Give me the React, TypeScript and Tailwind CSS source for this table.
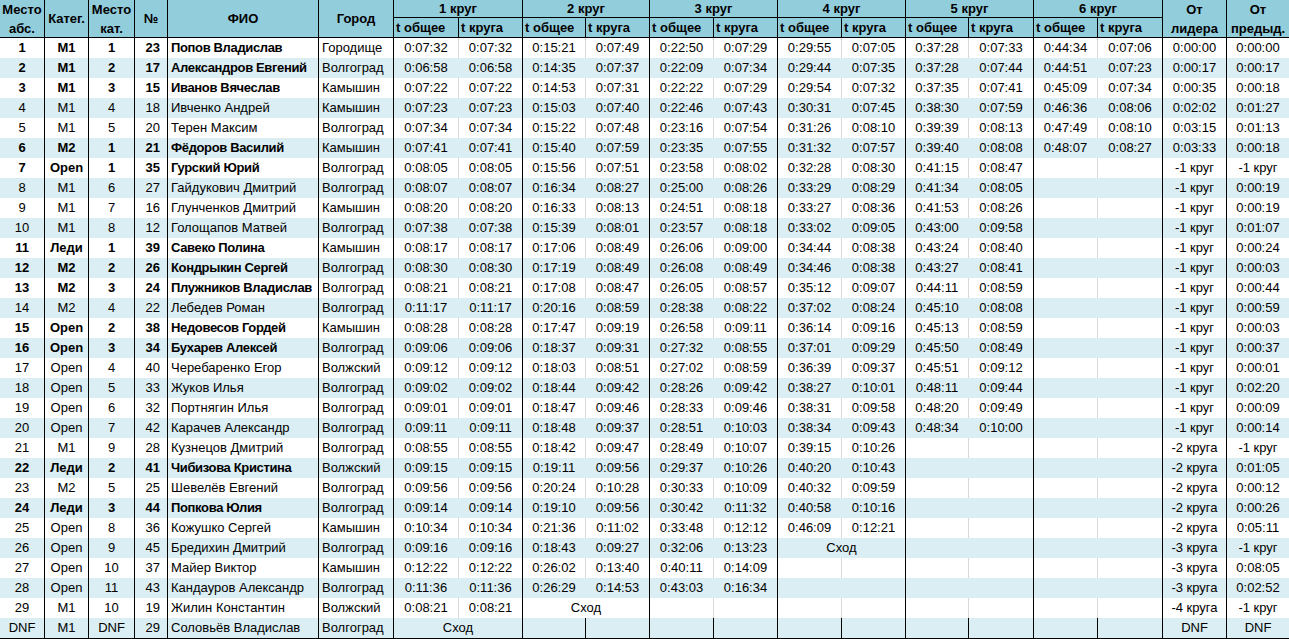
import React from "react";

type Row = {
  a: string; cat: string; pc: string; num: string; name: string; city: string;
  laps: (string[] | "dnf" | null)[]; lead: string; prev: string; bold?: boolean;
};

const L = (s: string): string[] => {
  const p = s.split(" ");
  return [p[0], p[1]];
};

const rows: Row[] = [
  { a: "1", cat: "M1", pc: "1", num: "23", name: "Попов Владислав", city: "Городище", laps: [L("0:07:32 0:07:32"), L("0:15:21 0:07:49"), L("0:22:50 0:07:29"), L("0:29:55 0:07:05"), L("0:37:28 0:07:33"), L("0:44:34 0:07:06")], lead: "0:00:00", prev: "0:00:00", bold: true },
  { a: "2", cat: "M1", pc: "2", num: "17", name: "Александров Евгений", city: "Волгоград", laps: [L("0:06:58 0:06:58"), L("0:14:35 0:07:37"), L("0:22:09 0:07:34"), L("0:29:44 0:07:35"), L("0:37:28 0:07:44"), L("0:44:51 0:07:23")], lead: "0:00:17", prev: "0:00:17", bold: true },
  { a: "3", cat: "M1", pc: "3", num: "15", name: "Иванов Вячеслав", city: "Камышин", laps: [L("0:07:22 0:07:22"), L("0:14:53 0:07:31"), L("0:22:22 0:07:29"), L("0:29:54 0:07:32"), L("0:37:35 0:07:41"), L("0:45:09 0:07:34")], lead: "0:00:35", prev: "0:00:18", bold: true },
  { a: "4", cat: "M1", pc: "4", num: "18", name: "Ивченко Андрей", city: "Камышин", laps: [L("0:07:23 0:07:23"), L("0:15:03 0:07:40"), L("0:22:46 0:07:43"), L("0:30:31 0:07:45"), L("0:38:30 0:07:59"), L("0:46:36 0:08:06")], lead: "0:02:02", prev: "0:01:27" },
  { a: "5", cat: "M1", pc: "5", num: "20", name: "Терен Максим", city: "Волгоград", laps: [L("0:07:34 0:07:34"), L("0:15:22 0:07:48"), L("0:23:16 0:07:54"), L("0:31:26 0:08:10"), L("0:39:39 0:08:13"), L("0:47:49 0:08:10")], lead: "0:03:15", prev: "0:01:13" },
  { a: "6", cat: "M2", pc: "1", num: "21", name: "Фёдоров Василий", city: "Камышин", laps: [L("0:07:41 0:07:41"), L("0:15:40 0:07:59"), L("0:23:35 0:07:55"), L("0:31:32 0:07:57"), L("0:39:40 0:08:08"), L("0:48:07 0:08:27")], lead: "0:03:33", prev: "0:00:18", bold: true },
  { a: "7", cat: "Open", pc: "1", num: "35", name: "Гурский Юрий", city: "Волгоград", laps: [L("0:08:05 0:08:05"), L("0:15:56 0:07:51"), L("0:23:58 0:08:02"), L("0:32:28 0:08:30"), L("0:41:15 0:08:47"), null], lead: "-1 круг", prev: "-1 круг", bold: true },
  { a: "8", cat: "M1", pc: "6", num: "27", name: "Гайдукович Дмитрий", city: "Волгоград", laps: [L("0:08:07 0:08:07"), L("0:16:34 0:08:27"), L("0:25:00 0:08:26"), L("0:33:29 0:08:29"), L("0:41:34 0:08:05"), null], lead: "-1 круг", prev: "0:00:19" },
  { a: "9", cat: "M1", pc: "7", num: "16", name: "Глунченков Дмитрий", city: "Камышин", laps: [L("0:08:20 0:08:20"), L("0:16:33 0:08:13"), L("0:24:51 0:08:18"), L("0:33:27 0:08:36"), L("0:41:53 0:08:26"), null], lead: "-1 круг", prev: "0:00:19" },
  { a: "10", cat: "M1", pc: "8", num: "12", name: "Голощапов Матвей", city: "Волгоград", laps: [L("0:07:38 0:07:38"), L("0:15:39 0:08:01"), L("0:23:57 0:08:18"), L("0:33:02 0:09:05"), L("0:43:00 0:09:58"), null], lead: "-1 круг", prev: "0:01:07" },
  { a: "11", cat: "Леди", pc: "1", num: "39", name: "Савеко Полина", city: "Камышин", laps: [L("0:08:17 0:08:17"), L("0:17:06 0:08:49"), L("0:26:06 0:09:00"), L("0:34:44 0:08:38"), L("0:43:24 0:08:40"), null], lead: "-1 круг", prev: "0:00:24", bold: true },
  { a: "12", cat: "M2", pc: "2", num: "26", name: "Кондрыкин Сергей", city: "Волгоград", laps: [L("0:08:30 0:08:30"), L("0:17:19 0:08:49"), L("0:26:08 0:08:49"), L("0:34:46 0:08:38"), L("0:43:27 0:08:41"), null], lead: "-1 круг", prev: "0:00:03", bold: true },
  { a: "13", cat: "M2", pc: "3", num: "24", name: "Плужников Владислав", city: "Волгоград", laps: [L("0:08:21 0:08:21"), L("0:17:08 0:08:47"), L("0:26:05 0:08:57"), L("0:35:12 0:09:07"), L("0:44:11 0:08:59"), null], lead: "-1 круг", prev: "0:00:44", bold: true },
  { a: "14", cat: "M2", pc: "4", num: "22", name: "Лебедев Роман", city: "Волгоград", laps: [L("0:11:17 0:11:17"), L("0:20:16 0:08:59"), L("0:28:38 0:08:22"), L("0:37:02 0:08:24"), L("0:45:10 0:08:08"), null], lead: "-1 круг", prev: "0:00:59" },
  { a: "15", cat: "Open", pc: "2", num: "38", name: "Недовесов Гордей", city: "Камышин", laps: [L("0:08:28 0:08:28"), L("0:17:47 0:09:19"), L("0:26:58 0:09:11"), L("0:36:14 0:09:16"), L("0:45:13 0:08:59"), null], lead: "-1 круг", prev: "0:00:03", bold: true },
  { a: "16", cat: "Open", pc: "3", num: "34", name: "Бухарев Алексей", city: "Волгоград", laps: [L("0:09:06 0:09:06"), L("0:18:37 0:09:31"), L("0:27:32 0:08:55"), L("0:37:01 0:09:29"), L("0:45:50 0:08:49"), null], lead: "-1 круг", prev: "0:00:37", bold: true },
  { a: "17", cat: "Open", pc: "4", num: "40", name: "Черебаренко Егор", city: "Волжский", laps: [L("0:09:12 0:09:12"), L("0:18:03 0:08:51"), L("0:27:02 0:08:59"), L("0:36:39 0:09:37"), L("0:45:51 0:09:12"), null], lead: "-1 круг", prev: "0:00:01" },
  { a: "18", cat: "Open", pc: "5", num: "33", name: "Жуков Илья", city: "Волгоград", laps: [L("0:09:02 0:09:02"), L("0:18:44 0:09:42"), L("0:28:26 0:09:42"), L("0:38:27 0:10:01"), L("0:48:11 0:09:44"), null], lead: "-1 круг", prev: "0:02:20" },
  { a: "19", cat: "Open", pc: "6", num: "32", name: "Портнягин Илья", city: "Волгоград", laps: [L("0:09:01 0:09:01"), L("0:18:47 0:09:46"), L("0:28:33 0:09:46"), L("0:38:31 0:09:58"), L("0:48:20 0:09:49"), null], lead: "-1 круг", prev: "0:00:09" },
  { a: "20", cat: "Open", pc: "7", num: "42", name: "Карачев Александр", city: "Волгоград", laps: [L("0:09:11 0:09:11"), L("0:18:48 0:09:37"), L("0:28:51 0:10:03"), L("0:38:34 0:09:43"), L("0:48:34 0:10:00"), null], lead: "-1 круг", prev: "0:00:14" },
  { a: "21", cat: "M1", pc: "9", num: "28", name: "Кузнецов Дмитрий", city: "Волгоград", laps: [L("0:08:55 0:08:55"), L("0:18:42 0:09:47"), L("0:28:49 0:10:07"), L("0:39:15 0:10:26"), null, null], lead: "-2 круга", prev: "-1 круг" },
  { a: "22", cat: "Леди", pc: "2", num: "41", name: "Чибизова Кристина", city: "Волжский", laps: [L("0:09:15 0:09:15"), L("0:19:11 0:09:56"), L("0:29:37 0:10:26"), L("0:40:20 0:10:43"), null, null], lead: "-2 круга", prev: "0:01:05", bold: true },
  { a: "23", cat: "M2", pc: "5", num: "25", name: "Шевелёв Евгений", city: "Волгоград", laps: [L("0:09:56 0:09:56"), L("0:20:24 0:10:28"), L("0:30:33 0:10:09"), L("0:40:32 0:09:59"), null, null], lead: "-2 круга", prev: "0:00:12" },
  { a: "24", cat: "Леди", pc: "3", num: "44", name: "Попкова Юлия", city: "Волгоград", laps: [L("0:09:14 0:09:14"), L("0:19:10 0:09:56"), L("0:30:42 0:11:32"), L("0:40:58 0:10:16"), null, null], lead: "-2 круга", prev: "0:00:26", bold: true },
  { a: "25", cat: "Open", pc: "8", num: "36", name: "Кожушко Сергей", city: "Камышин", laps: [L("0:10:34 0:10:34"), L("0:21:36 0:11:02"), L("0:33:48 0:12:12"), L("0:46:09 0:12:21"), null, null], lead: "-2 круга", prev: "0:05:11" },
  { a: "26", cat: "Open", pc: "9", num: "45", name: "Бредихин Дмитрий", city: "Волгоград", laps: [L("0:09:16 0:09:16"), L("0:18:43 0:09:27"), L("0:32:06 0:13:23"), "dnf", null, null], lead: "-3 круга", prev: "-1 круг" },
  { a: "27", cat: "Open", pc: "10", num: "37", name: "Майер Виктор", city: "Камышин", laps: [L("0:12:22 0:12:22"), L("0:26:02 0:13:40"), L("0:40:11 0:14:09"), null, null, null], lead: "-3 круга", prev: "0:08:05" },
  { a: "28", cat: "Open", pc: "11", num: "43", name: "Кандауров Александр", city: "Волгоград", laps: [L("0:11:36 0:11:36"), L("0:26:29 0:14:53"), L("0:43:03 0:16:34"), null, null, null], lead: "-3 круга", prev: "0:02:52" },
  { a: "29", cat: "M1", pc: "10", num: "19", name: "Жилин Константин", city: "Волжский", laps: [L("0:08:21 0:08:21"), "dnf", null, null, null, null], lead: "-4 круга", prev: "-1 круг" },
  { a: "DNF", cat: "M1", pc: "DNF", num: "29", name: "Соловьёв Владислав", city: "Волгоград", laps: ["dnf", null, null, null, null, null], lead: "DNF", prev: "DNF" },
];

const GRID =
  "grid grid-cols-[45px_44px_46px_33px_151px_75px_65px_64px_63px_64px_64px_64px_64px_64px_63px_65px_64px_65px_64px_62px]";

const hb = "border-r border-b border-black bg-[#92cddc] font-bold flex items-center justify-center text-center leading-[19px]";

function DataRow({ r, i }: { r: Row; i: number }) {
  const blue = i % 2 === 1;
  const bg = blue ? "bg-[#daeef3]" : "bg-white";
  const inner = blue ? "border-[#daeef3]" : "border-[#d9d9d9]";
  const w = r.bold ? "font-bold" : "font-normal";
  const nameW = r.bold ? "font-bold tracking-[-0.35px]" : "font-normal";
  const last = i === rows.length - 1 ? "border-b border-black h-[21px]" : "h-[20px]";
  const base = `${bg} ${last} flex items-center whitespace-nowrap overflow-hidden`;
  return (
    <>
      <div className={`${base} ${w} justify-center border-r border-black`}>{r.a}</div>
      <div className={`${base} ${w} justify-center border-r border-black`}>{r.cat}</div>
      <div className={`${base} ${w} justify-center border-r border-black`}>{r.pc}</div>
      <div className={`${base} ${w} justify-end pr-[7px] border-r border-black`}>{r.num}</div>
      <div className={`${base} ${nameW} pl-[3px] border-r border-black`}>{r.name}</div>
      <div className={`${base} pl-[3px] border-r border-black`}>{r.city}</div>
      {r.laps.map((lap, k) =>
        lap === "dnf" ? (
          <div key={k} className={`${base} col-span-2 justify-center border-r border-black`}>Сход</div>
        ) : (
          <React.Fragment key={k}>
            <div className={`${base} justify-center border-r ${inner}`}>{lap ? lap[0] : ""}</div>
            <div className={`${base} justify-center border-r border-black`}>{lap ? lap[1] : ""}</div>
          </React.Fragment>
        )
      )}
      <div className={`${base} justify-center border-r border-black`}>{r.lead}</div>
      <div className={`${base} justify-center`}>{r.prev}</div>
    </>
  );
}

export default function App() {
  const laps = ["1 круг", "2 круг", "3 круг", "4 круг", "5 круг", "6 круг"];
  return (
    <div
      className="w-[1289px] h-[639px] bg-white text-black text-[13px] overflow-hidden"
      style={{ fontFamily: '"Liberation Sans", Arial, sans-serif' }}
    >
      <div className={`${GRID} grid-rows-[18px_20px]`}>
        <div className={`${hb} row-span-2`}>Место<br />абс.</div>
        <div className={`${hb} row-span-2`}>Катег.</div>
        <div className={`${hb} row-span-2`}>Место<br />кат.</div>
        <div className={`${hb} row-span-2`}>№</div>
        <div className={`${hb} row-span-2`}>ФИО</div>
        <div className={`${hb} row-span-2`}>Город</div>
        {laps.map((l) => (
          <div key={l} className={`${hb} col-span-2`}>{l}</div>
        ))}
        <div className={`${hb} row-span-2`}>От<br />лидера</div>
        <div className={`${hb} row-span-2 border-r-0`}>От<br />предыд.</div>
        {laps.map((l) => (
          <React.Fragment key={l}>
            <div className={`${hb} justify-start pl-[2px]`}>t общее</div>
            <div className={`${hb} justify-start pl-[2px]`}>t круга</div>
          </React.Fragment>
        ))}
      </div>
      <div className={GRID}>
        {rows.map((r, i) => (
          <DataRow key={i} r={r} i={i} />
        ))}
      </div>
    </div>
  );
}
